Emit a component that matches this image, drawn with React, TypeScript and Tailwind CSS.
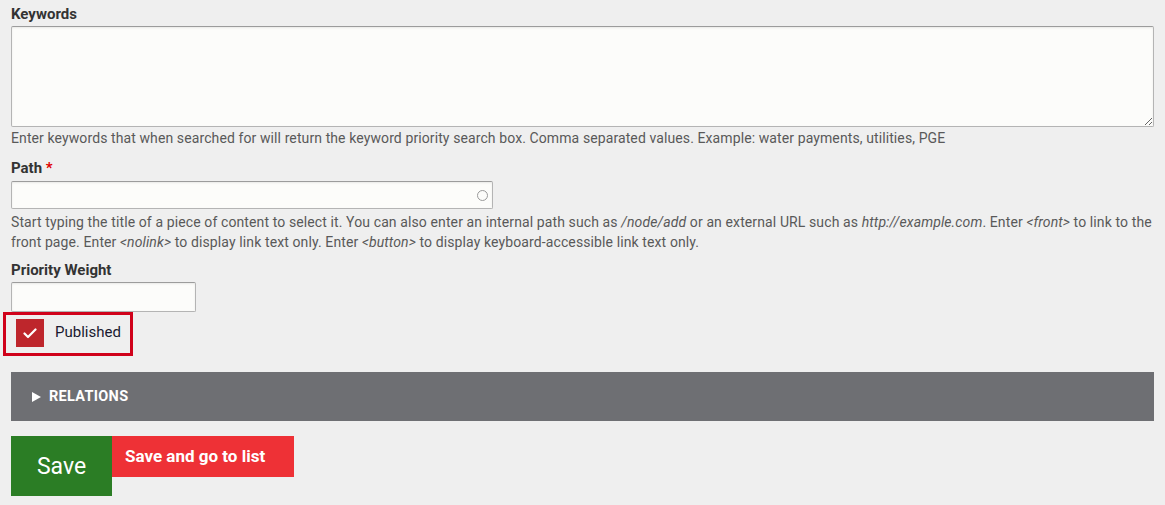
import React from "react";

export default function App() {
  return (
    <div
      className="w-full h-[505px] bg-[#efefef] px-[11px] pt-[4px] text-[14px] overflow-hidden"
      style={{ fontFamily: "Roboto, 'Liberation Sans', sans-serif" }}
    >
      <div className="leading-[20px] text-[15px] font-bold text-[#333333] mb-[2px]">Keywords</div>
      <textarea className="block w-full h-[101px] bg-[#fcfcfa] border border-[#b4b4b4] border-t-[#9c9c9c] rounded-[2px] shadow-[inset_0_1px_2px_rgba(0,0,0,0.08)] outline-none" />
      <div className="mt-[1px] leading-[20px] text-[#595959] tracking-[0.1px]">
        Enter keywords that when searched for will return the keyword priority search box. Comma separated values. Example: water payments, utilities, PGE
      </div>

      <div className="mt-[10px] leading-[20px] text-[15px] font-bold text-[#333333] mb-[3px]">
        Path <span className="text-[#e00000]">*</span>
      </div>
      <div className="relative w-[482px] h-[28px] bg-[#fcfcfa] border border-[#b4b4b4] border-t-[#9c9c9c] rounded-[2px] shadow-[inset_0_1px_2px_rgba(0,0,0,0.08)]">
        <span className="absolute right-[4px] top-[8px] w-[11px] h-[11px] rounded-full border-[1.5px] border-[#9a9a9a]" />
      </div>
      <div className="mt-[3px] leading-[20px] text-[#595959] tracking-[0.11px]">
        Start typing the title of a piece of content to select it. You can also enter an internal path such as <em>/node/add</em> or an external URL such as <em>http://example.com</em>. Enter <em>&lt;front&gt;</em> to link to the front page. Enter <em>&lt;nolink&gt;</em> to display link text only. Enter <em>&lt;button&gt;</em> to display keyboard-accessible link text only.
      </div>

      <div className="mt-[8px] leading-[20px] text-[15px] font-bold text-[#333333] mb-[2px]">Priority Weight</div>
      <div className="w-[185px] h-[30px] bg-[#fcfcfa] border border-[#b4b4b4] border-t-[#9c9c9c] rounded-[2px] shadow-[inset_0_1px_2px_rgba(0,0,0,0.08)]" />

      <div className="-ml-[8px] w-[130px] h-[44px] border-[3px] border-[#d0021b] flex items-center pl-[10px] pb-[2px]">
        <div className="w-[28px] h-[28px] bg-[#be262c] flex items-center justify-center">
          <svg width="14" height="11" viewBox="0 0 14 11" fill="none">
            <path d="M1.5 5.5 L5 9 L12.5 1.5" stroke="white" strokeWidth="2.2" strokeLinecap="round" strokeLinejoin="round" />
          </svg>
        </div>
        <span className="ml-[11px] text-[15px] leading-[20px] text-[#1a1a30] -mt-[3px]">Published</span>
      </div>

      <div className="mt-[16px] h-[49px] bg-[#6e6f73] flex items-center pl-[21px] pt-[1px]">
        <svg width="9" height="10" viewBox="0 0 9 10" className="mr-[8px]">
          <path d="M0 0 L9 5 L0 10 Z" fill="white" />
        </svg>
        <span className="text-white font-bold text-[14.5px] tracking-[0.3px]">RELATIONS</span>
      </div>

      <div className="mt-[15px] flex items-start">
        <button className="w-[101px] h-[60px] bg-[#2b7d25] text-white text-[23px] pt-[2px]">Save</button>
        <button className="w-[182px] h-[41px] bg-[#ee3136] text-white font-bold text-[17px] text-left pl-[13px] pt-[1px]">
          Save and go to list
        </button>
      </div>
    </div>
  );
}
